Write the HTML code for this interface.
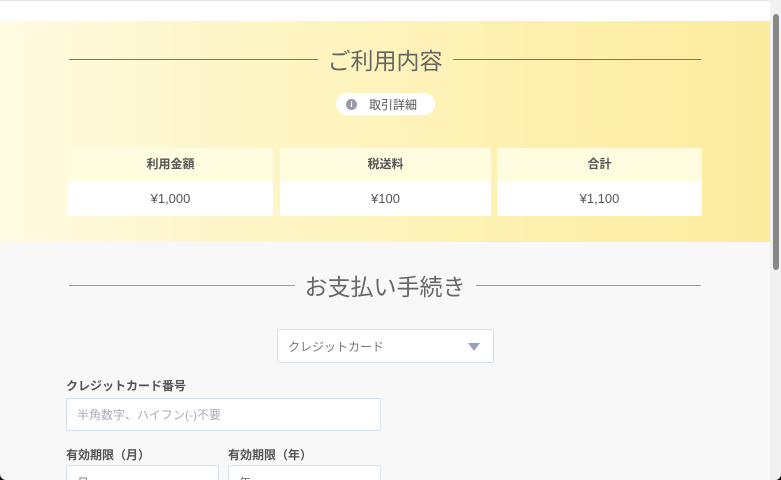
<!DOCTYPE html>
<html><head><meta charset="utf-8"><style>
*{margin:0;padding:0;box-sizing:border-box}
body{width:781px;height:480px;overflow:hidden;background:#000;font-family:"Liberation Sans","Noto Sans CJK JP",sans-serif;position:relative}
.page{position:absolute;left:0;top:0;width:781px;height:480px;background:#f8f8f8;border-radius:0 0 6px 6px;overflow:hidden}
.topb{position:absolute;left:0;top:0;width:770px;height:21px;background:#fff;border-top:1px solid #e4e4e8}
.yel{position:absolute;left:0;top:21px;width:770px;height:221px;background:linear-gradient(90deg,#fffbe2 0%,#fef6c8 30%,#fdf0ae 70%,#fcec9e 100%)}
.h{position:absolute;left:69px;width:632px;display:flex;align-items:center;color:#666;font-size:23px}
.h .l{flex:1;height:1px;background:#777}
.h span{padding:0 10px}
.pill{position:absolute;left:336px;top:93px;width:99px;height:22px;background:#fff;border-radius:11px;font-size:12px;color:#555;display:flex;align-items:center;padding-left:10px}
.pill i{width:11px;height:11px;border-radius:50%;background:#99a;margin-right:12px;color:#fff;font-size:8px;font-style:normal;text-align:center;line-height:11px;font-weight:bold}
.cell{position:absolute;top:148px;height:68px}
.cell .a{height:34px;background:#fffce0;font-size:12px;font-weight:bold;color:#555;text-align:center;line-height:32px}
.cell .b{height:34px;background:#fff;font-size:13px;color:#555;text-align:center;line-height:34px}
.sel{position:absolute;background:#fff;border:1px solid #d8e2ee;border-radius:2px;font-size:12px;color:#777}
.tri{position:absolute;width:0;height:0;border-left:6px solid transparent;border-right:6px solid transparent;border-top:8px solid #95a3b8}
.lab{position:absolute;font-size:12px;font-weight:bold;color:#555}
.sb{position:absolute;left:770px;top:0;width:11px;height:480px;background:#f1f1f1}
.th{position:absolute;left:773px;top:14px;width:6px;height:256px;background:#888;border-radius:3px}
</style></head><body><div class="page">
<div class="topb"></div>
<div class="yel"></div>
<div class="h" style="top:42px"><div class="l"></div><span>ご利用内容</span><div class="l"></div></div>
<div class="pill"><i>i</i>取引詳細</div>
<div class="cell" style="left:68px;width:205px"><div class="a">利用金額</div><div class="b">¥1,000</div></div>
<div class="cell" style="left:280px;width:211px"><div class="a">税送料</div><div class="b">¥100</div></div>
<div class="cell" style="left:497px;width:205px"><div class="a">合計</div><div class="b">¥1,100</div></div>
<div class="h" style="top:268px"><div class="l" style="background:#999"></div><span>お支払い手続き</span><div class="l" style="background:#999"></div></div>
<div class="sel" style="left:277px;top:329px;width:217px;height:34px;padding:8px 0 0 10px">クレジットカード<div class="tri" style="left:190px;top:13px"></div></div>
<div class="lab" style="left:66px;top:377px">クレジットカード番号</div>
<div class="sel" style="left:66px;top:398px;width:315px;height:33px;padding:7px 0 0 10px;color:#aab">半角数字、ハイフン(-)不要</div>
<div class="lab" style="left:66px;top:446px">有効期限（月）</div>
<div class="lab" style="left:228px;top:446px">有効期限（年）</div>
<div class="sel" style="left:66px;top:465px;width:153px;height:30px;padding:8px 0 0 10px">月</div>
<div class="sel" style="left:228px;top:465px;width:153px;height:30px;padding:8px 0 0 10px">年</div>
<div class="sb"></div><div class="th"></div>
</div></body></html>
